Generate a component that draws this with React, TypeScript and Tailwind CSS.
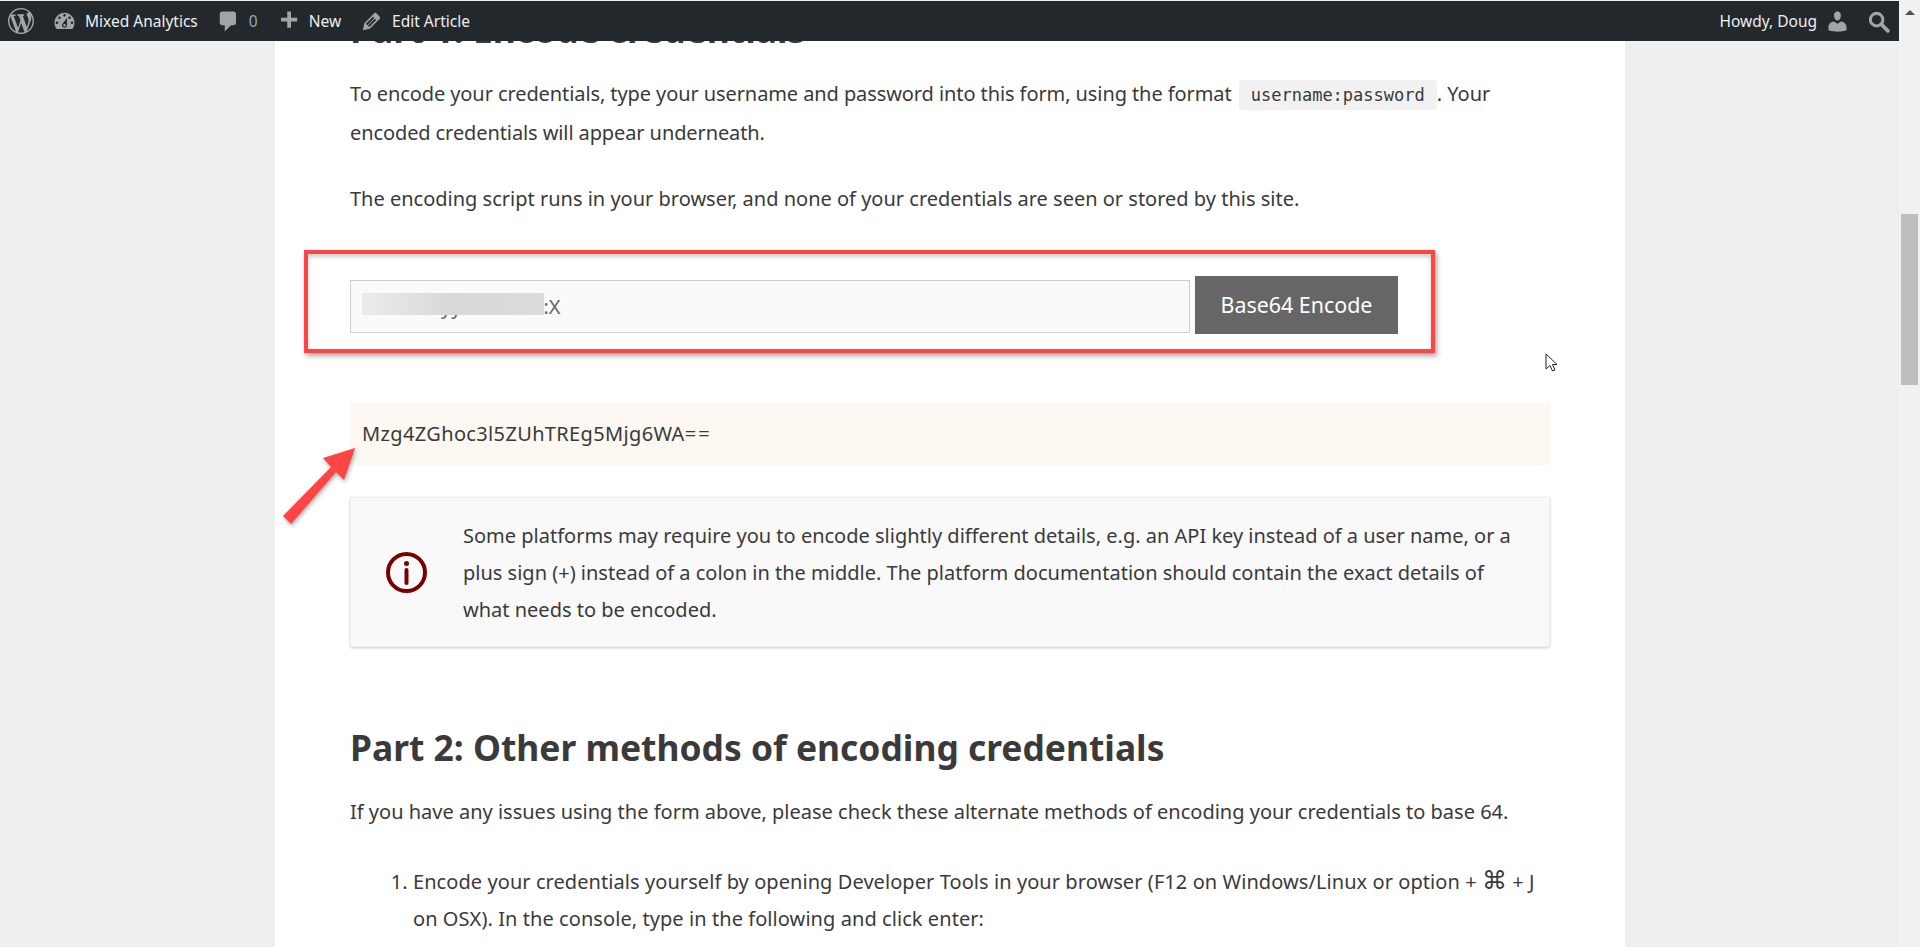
function Para({ children, className = "" }: { children: React.ReactNode; className?: string }) {
  return <p className={`text-[20px] leading-[37px] ${className}`}>{children}</p>;
}

function AdminBar() {
  return (
    <div className="flex h-10 shrink-0 items-center justify-between bg-[#23282d] text-[15.5px] text-[#eee]">
      <div className="flex items-center">
        <svg viewBox="0 0 20 20" className="ml-2 h-[26px] w-[26px] fill-[#a0a5aa]">
          <path d="M20 10c0-5.51-4.49-10-10-10C4.480 0 0 4.490 0 10c0 5.520 4.480 10 10 10 5.510 0 10-4.480 10-10zM7.780 15.370L4.370 6.220c.55-.02 1.170-.08 1.170-.08.500-.06.440-1.130-.06-1.110 0 0-1.450.11-2.370.11-.18 0-.37 0-.58-.01C4.120 2.690 6.890 1.050 10 1.050c2.330 0 4.450.87 6.050 2.340-.68-.11-1.650.39-1.650 1.580 0 .74.45 1.360.9 2.100.35.61.55 1.360.55 2.460 0 1.490-1.400 5-1.400 5l-3.030-8.370c.54-.02.82-.17.82-.17.500-.05.440-1.250-.06-1.220 0 0-1.440.12-2.380.12-.87 0-2.330-.12-2.330-.12-.5-.03-.56 1.200-.06 1.220l.92.080 1.260 3.410zM17.410 10c.24-.64.74-1.870.43-4.250.7 1.290 1.050 2.710 1.050 4.250 0 3.290-1.730 6.240-4.400 7.780.97-2.590 1.940-5.200 2.920-7.780zM6.100 18.090C3.120 16.650 1.110 13.530 1.110 10c0-1.300.23-2.480.72-3.590C3.250 10.300 4.670 14.200 6.100 18.090zm4.030-6.630l2.580 6.980c-.86.290-1.760.45-2.710.45-.79 0-1.570-.11-2.290-.33.810-2.380 1.620-4.740 2.420-7.100z" />
        </svg>
        <svg viewBox="0 0 20 20" className="ml-[18px] h-[25px] w-[25px] fill-[#a0a5aa]">
          <path d="M3.760 16h12.480c1.100-1.370 1.760-3.110 1.760-5 0-4.420-3.580-8-8-8s-8 3.580-8 8c0 1.890.66 3.630 1.760 5zM10 4c.55 0 1 .45 1 1s-.45 1-1 1-1-.45-1-1 .45-1 1-1zM6 6c.55 0 1 .45 1 1s-.45 1-1 1-1-.45-1-1 .45-1 1-1zm8 0c.55 0 1 .45 1 1s-.45 1-1 1-1-.45-1-1 .45-1 1-1zm-5.370 5.550L12 7v6c0 1.100-.9 2-2 2s-2-.9-2-2c0-.57.24-1.080.63-1.450zM4 10c.55 0 1 .45 1 1s-.45 1-1 1-1-.45-1-1 .45-1 1-1zm12 0c.55 0 1 .45 1 1s-.45 1-1 1-1-.45-1-1 .45-1 1-1zm-5 3c0-.55-.45-1-1-1s-1 .45-1 1 .45 1 1 1 1-.45 1-1z" />
        </svg>
        <span className="ml-2 mt-[2px]">Mixed Analytics</span>
        <svg viewBox="0 0 20 20" className="ml-[18px] h-[25px] w-[25px] fill-[#a0a5aa]">
          <path d="M5 2h9c1.100 0 2 .9 2 2v7c0 1.100-.9 2-2 2h-2l-5 5v-5H5c-1.100 0-2-.9-2-2V4c0-1.100.9-2 2-2z" />
        </svg>
        <span className="ml-2 mt-[2px] text-[#a0a5aa]">0</span>
        <svg viewBox="0 0 20 20" className="ml-[18px] h-[25px] w-[25px] fill-[#a0a5aa]">
          <path d="M17 7v3h-5v5H9v-5H4V7h5V2h3v5h5z" />
        </svg>
        <span className="ml-2 mt-[2px]">New</span>
        <svg viewBox="0 0 20 20" className="ml-[18px] h-[25px] w-[25px] fill-[#a0a5aa]">
          <path d="M13.890 3.390l2.710 2.720c.46.46.42 1.240.03 1.640l-8.010 8.020-5.560 1.160 1.160-5.580s7.600-7.630 7.990-8.030c.39-.39 1.220-.39 1.680.07zm-2.730 2.790l-5.590 5.610 1.110 1.110 5.540-5.650zm-2.970 8.230l5.580-5.600-1.070-1.080-5.590 5.600z" />
        </svg>
        <span className="ml-2 mt-[2px]">Edit Article</span>
      </div>
      <div className="flex items-center">
        <span className="mt-[2px]">Howdy, Doug</span>
        <svg viewBox="0 0 20 20" className="ml-2 h-[25px] w-[25px] fill-[#a0a5aa]">
          <path d="M10 9.250c-2.270 0-2.730-3.440-2.730-3.440C7 4.020 7.820 2 9.970 2c2.160 0 2.980 2.020 2.710 3.810 0 0-.41 3.440-2.680 3.440zm0 2.570L12.720 10c2.390 0 4.520 2.330 4.520 4.530v2.490s-3.650 1.130-7.240 1.130c-3.650 0-7.240-1.130-7.240-1.130v-2.490c0-2.250 1.940-4.480 4.470-4.480z" />
        </svg>
        <svg viewBox="0 0 20 20" className="ml-4 mr-2 h-[25px] w-[25px] fill-none stroke-[#a0a5aa]">
          <circle cx="8.500" cy="8.500" r="5" strokeWidth="2.400" />
          <path d="M12.500 12.500l5 5" strokeWidth="3" strokeLinecap="round" />
        </svg>
      </div>
    </div>
  );
}

function Scrollbar() {
  return (
    <div className="flex w-[21px] shrink-0 flex-col bg-[#f1f1f1]">
      <div className="flex h-[21px] items-center justify-center">
        <div className="mt-[4px] h-0 w-0 border-x-[5px] border-b-[5px] border-x-transparent border-b-[#505050]" />
      </div>
      <div className="mx-[2px] mt-[193px] h-[171px] bg-[#bebebe]" />
    </div>
  );
}

export default function App() {
  return (
    <div className="flex h-[947px] overflow-hidden bg-[#efefef] font-['Noto_Sans','Open_Sans',sans-serif] text-[#3a3a3a]">
      <div className="flex min-w-0 flex-1 flex-col pt-px">
        <AdminBar />
        <div className="relative min-h-0 flex-1 overflow-hidden">
          <main className="ml-[275px] h-full w-[1350px] overflow-hidden bg-white px-[75px]">
            <h2 className="-mt-[30px] h-[36px] whitespace-nowrap text-[35.4px] font-bold leading-[36px]">Part 1: Encode credentials</h2>
            <Para className="mt-[28px]">
              <span className="tracking-[-0.09px]">
                To encode your credentials, type your username and password into this form, using the format
              </span>{" "}
              <code className="ml-[2px] rounded-[2px] bg-[#f1f1f1] px-3 py-[5px] font-['DejaVu_Sans_Mono',monospace] text-[17px]">
                username:password
              </code>
              . Your <span className="tracking-[-0.1px]">encoded credentials will appear underneath.</span>
            </Para>
            <Para className="mt-[29px]">
              The encoding script runs in your browser, and none of your credentials are seen or stored by this site.
            </Para>

            <div className="mt-[59px] flex h-[58px] items-start">
              <div className="relative mt-1 flex h-[53px] w-[840px] items-center border border-[#cccccc] bg-[#fafafa] pl-3 text-[20px] text-[#666]">
                <span className="ml-[78px]">yy</span>
                <span className="ml-[82px]">:X</span>
                <div className="absolute left-[11px] top-[12px] h-[22px] w-[182px] bg-linear-to-r from-[#ececec] via-[#d8d8d8] to-[#dcdcdc]" />
              </div>
              <button className="ml-[5px] h-[58px] w-[203px] bg-[#666666] text-[21.4px] text-white">Base64 Encode</button>
            </div>

            <div className="mt-[69px] flex h-[62px] items-center bg-[#fdf8f1] pl-3 text-[20px] tracking-[0.35px]">
              Mzg4ZGhoc3l5ZUhTREg5Mjg6WA<span className="tracking-[2px]">==</span>
            </div>

            <div className="mt-[32px] flex h-[150px] items-center rounded-[2px] border border-[#eeeeee] bg-[#f9f9f9] shadow-[0_1px_3px_rgba(0,0,0,0.2)]">
              <svg viewBox="0 0 41 41" className="ml-[35px] h-[41px] w-[41px] shrink-0 fill-none stroke-[#7a0000]">
                <circle cx="20.500" cy="20.500" r="18.500" strokeWidth="4" />
                <circle cx="20.500" cy="11.500" r="2.500" className="fill-[#7a0000] stroke-none" />
                <path d="M20.500 18v13" strokeWidth="4" strokeLinecap="round" />
              </svg>
              <Para className="ml-[36px] pr-[25px]">
                Some platforms may require you to encode slightly different details, e.g. an API key instead of a user name, or a plus sign (+) instead of a colon in the middle. The platform documentation should contain the exact details of what needs to be encoded.
              </Para>
            </div>

            <h2 className="mt-[75px] text-[35.4px] font-bold leading-[50px]">Part 2: Other methods of encoding credentials</h2>
            <Para className="mt-[21px]">
              If you have any issues using the form above, please check these alternate methods of encoding your credentials to base 64.
            </Para>
            <ol className="ml-[39px] mt-[33px] list-decimal pl-[24px]">
              <li className="text-[20px] leading-[37px] tracking-[0.07px]">
                Encode your credentials yourself by opening Developer Tools in your browser (F12 on Windows/Linux or option + <span className="text-[25px] leading-none">⌘</span> + J on OSX). In the console, type in the following and click enter:
              </li>
            </ol>
          </main>

          {/* annotations drawn over the screenshot */}
          <div className="absolute left-[304px] top-[209px] h-[103px] w-[1131px] border-[4px] border-[#ff4444] shadow-[2px_3px_5px_rgba(0,0,0,0.35),inset_0_3px_4px_rgba(0,0,0,0.2)]" />
          <svg viewBox="0 0 90 90" className="absolute left-[275px] top-[402px] h-[90px] w-[90px] drop-shadow-[1px_2px_2px_rgba(0,0,0,0.35)]">
            <path d="M80 5L48 15l8 9L8 73l8 8 45-52 8 8z" className="fill-[#ff4444]" />
          </svg>
          <svg viewBox="0 0 14 20" className="absolute left-[1545px] top-[312px] h-[20px] w-[14px]">
            <path d="M1 1v15l4-3.500 2.500 5.500 2.500-1-2.500-5.500H12z" className="fill-white stroke-[#222]" strokeWidth="1" />
          </svg>
        </div>
      </div>
      <Scrollbar />
    </div>
  );
}
